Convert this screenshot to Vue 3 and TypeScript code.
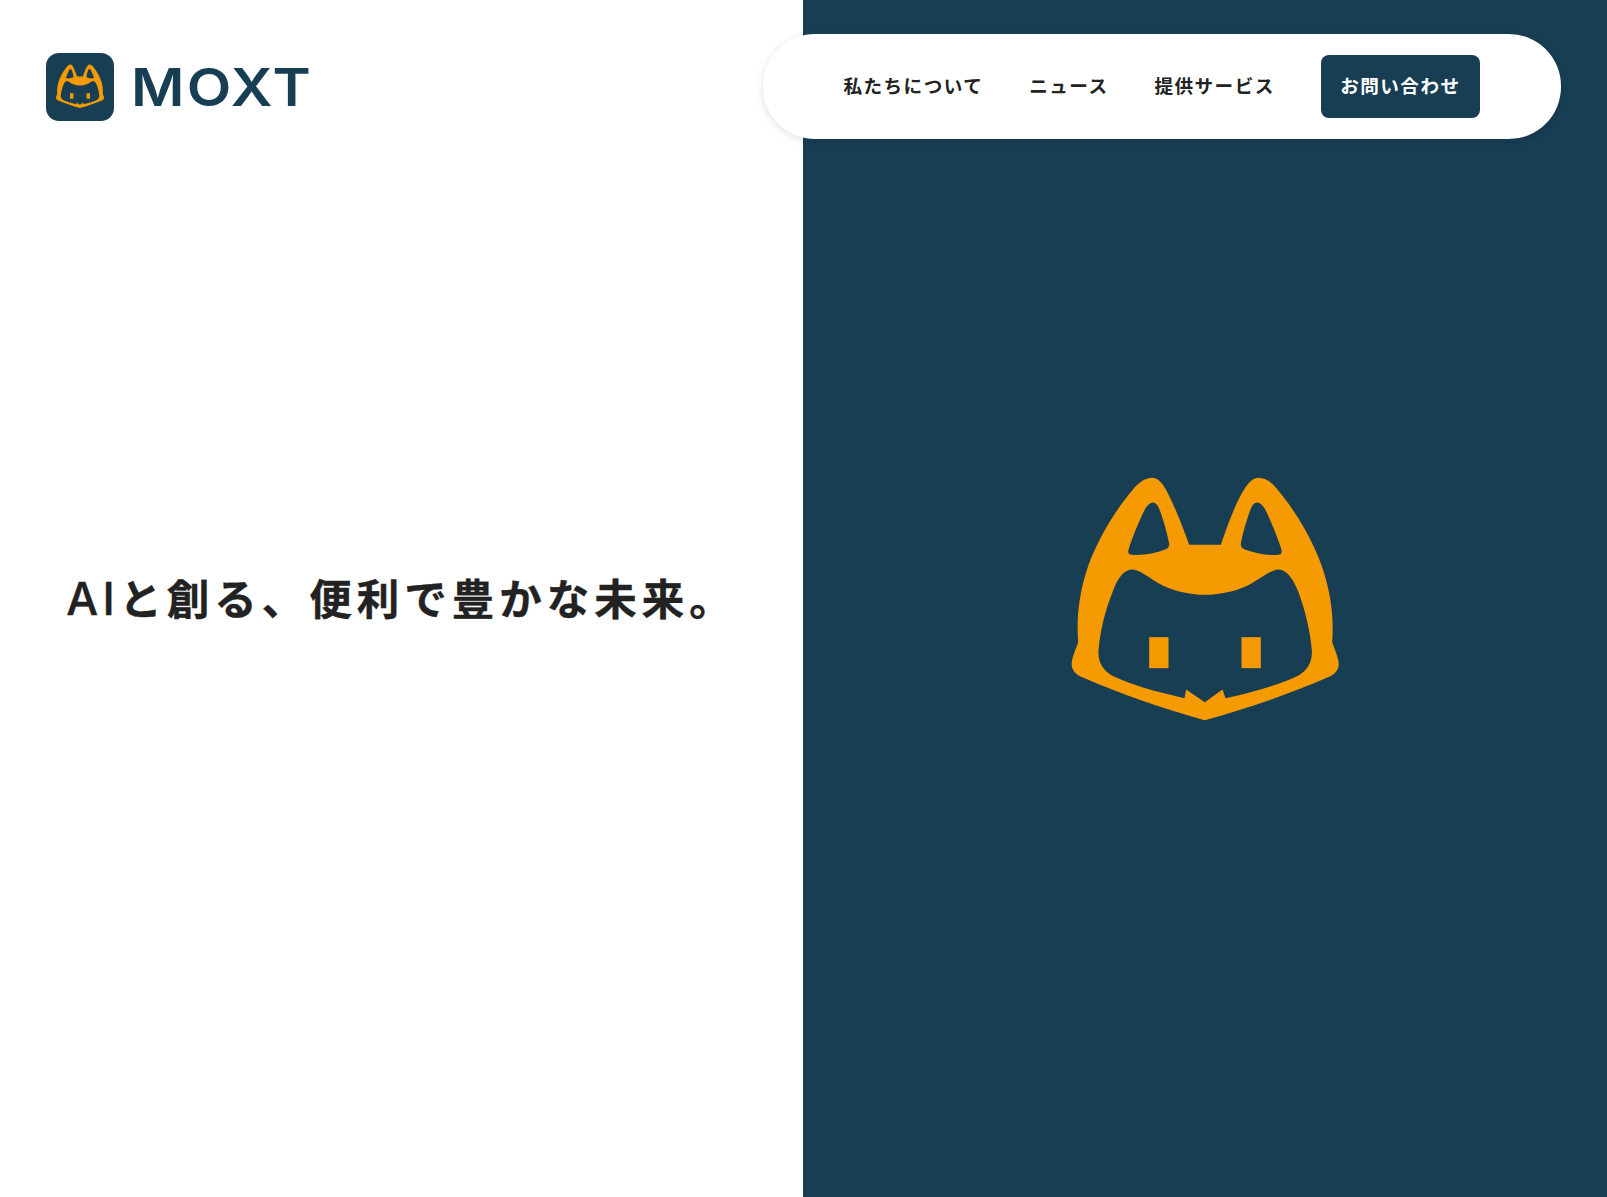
<script setup lang="ts">
const catPath =
  'M464 779C340 745 210 700 100 652C70 640 62 622 65 603C68 585 78 562 84 545C78 470 88 400 108 335C132 255 190 155 250 85C270 62 290 52 305 52C325 52 338 70 350 92C375 140 400 205 417 253L512 253C530 200 555 130 580 90C595 65 610 52 625 52C645 52 665 65 680 85C740 155 797 255 821 335C841 400 852 470 846 545C852 562 862 585 865 603C868 622 860 640 830 652C720 700 590 745 464 779Z' +
  'M464 725L517 687L526 713C610 695 690 672 745 645C775 628 787 600 785 570C780 510 765 450 745 395C725 345 705 327 683 327C660 330 640 347 610 365C570 390 510 403 464 403C420 403 360 390 320 365C290 347 270 330 247 327C225 327 205 345 187 395C165 450 150 510 145 570C143 600 155 628 185 645C240 672 320 695 403 713L408 687Z' +
  'M308 126C320 126 325 140 330 152C340 180 352 220 357 250C358 258 352 265 345 267C315 278 280 286 245 283C235 283 232 275 236 265C245 235 265 185 285 145C292 133 300 126 308 126Z' +
  'M621 126C609 126 604 140 599 152C589 180 577 220 572 250C571 258 577 265 584 267C614 278 649 286 684 283C694 283 697 275 693 265C684 235 664 185 644 145C637 133 629 126 621 126Z'

const navItems: string[] = ['私たちについて', 'ニュース', '提供サービス']
</script>

<template>
  <div class="page">
    <section class="left">
      <h1 class="headline"><span class="latin">AI</span>と創る、便利で豊かな未来。</h1>
    </section>
    <section class="right">
      <svg class="cat-large" viewBox="14.5 10.5 900 810" aria-hidden="true">
        <path :d="catPath" fill="#f59a00" fill-rule="evenodd" />
        <rect x="297" y="530" width="58" height="93" fill="#f59a00" />
        <rect x="574" y="530" width="58" height="93" fill="#f59a00" />
      </svg>
    </section>

    <header class="header">
      <div class="brand">
        <div class="brand-mark">
          <svg class="cat-small" viewBox="14.5 10.5 900 810" aria-hidden="true">
            <path :d="catPath" fill="#f59a00" fill-rule="evenodd" />
            <rect x="297" y="530" width="58" height="93" fill="#f59a00" />
            <rect x="574" y="530" width="58" height="93" fill="#f59a00" />
          </svg>
        </div>
        <span class="brand-name">MOXT</span>
      </div>
      <nav class="nav">
        <a v-for="item in navItems" :key="item" class="nav-link">{{ item }}</a>
        <a class="nav-cta">お問い合わせ</a>
      </nav>
    </header>
  </div>
</template>

<style scoped>
.page {
  position: relative;
  display: flex;
  height: 1197px;
  overflow: hidden;
  font-family: "Noto Sans CJK JP", "Noto Sans", sans-serif;
  color: #222;
}
.left,
.right {
  display: flex;
  align-items: center;
  justify-content: center;
}
.left {
  flex: 0 0 803px;
  background: #fff;
}
.right {
  flex: 1 1 0;
  background: #173e53;
}
.headline {
  margin: 0;
  font-size: 42.5px;
  font-weight: 700;
  letter-spacing: 5px;
  line-height: 1.5;
  white-space: nowrap;
  -webkit-text-stroke: 0.4px #222;
}
.latin {
  font-family: Inter, "Liberation Sans", sans-serif;
  font-size: 45px;
  font-weight: 500;
  letter-spacing: 4.5px;
}
.cat-large {
  width: 300px;
  height: 270px;
  display: block;
}
.header {
  position: absolute;
  top: 34px;
  left: 46px;
  right: 46px;
  display: flex;
  align-items: center;
  justify-content: space-between;
}
.brand {
  display: flex;
  align-items: center;
  gap: 17px;
}
.brand-mark {
  width: 68px;
  height: 68px;
  border-radius: 13px;
  background: #173e53;
  display: flex;
  align-items: center;
  justify-content: center;
}
.cat-small {
  width: 54px;
  height: 48.6px;
  display: block;
}
.brand-name {
  font-family: Inter, "Liberation Sans", sans-serif;
  font-size: 52px;
  font-weight: 600;
  line-height: 1;
  letter-spacing: 2px;
  color: #173e53;
  padding-top: 2px;
  transform: scaleX(1.115);
  transform-origin: left center;
}
.nav {
  display: flex;
  align-items: center;
  gap: 46px;
  height: 105px;
  padding: 0 81px 0 80px;
  border-radius: 52px;
  background: #fff;
  box-shadow: 0 2px 8px rgba(0, 0, 0, 0.12);
}
.nav-link,
.nav-cta {
  font-size: 18.6px;
  font-weight: 700;
  letter-spacing: 1.45px;
  line-height: 1.4;
  white-space: nowrap;
}
.nav-link {
  padding-bottom: 3px;
}
.nav-cta {
  display: flex;
  align-items: center;
  height: 63px;
  padding: 0 19.5px 3px;
  box-sizing: border-box;
  border-radius: 8px;
  background: #173e53;
  color: #fff;
}
</style>
